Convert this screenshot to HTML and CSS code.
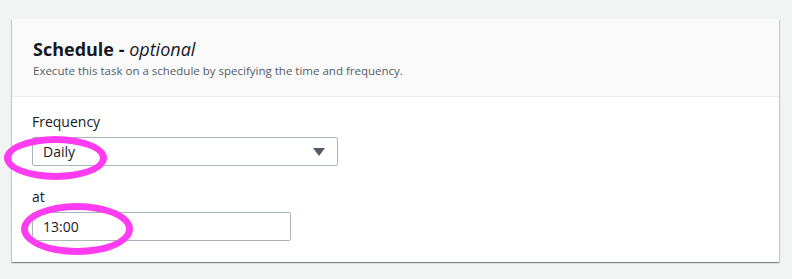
FILE: index.html
```html
<!DOCTYPE html>
<html lang="en">
<head>
    <meta charset="UTF-8">
    <title>Schedule</title>
    <link rel="stylesheet" href="styles.css">
</head>
<body>
<div class="container">
    <header class="container-header">
        <h2>Schedule - <em>optional</em></h2>
        <p class="description">Execute this task on a schedule by specifying the time and frequency.</p>
    </header>
    <div class="container-body">
        <div class="field">
            <label class="field-label">Frequency</label>
            <div class="select">
                <span>Daily</span>
                <svg class="caret" width="12" height="8" viewBox="0 0 12 8"><path d="M0 0h12L6 8z" fill="#545b64"/></svg>
            </div>
        </div>
        <div class="field">
            <label class="field-label">at</label>
            <div class="input">13:00</div>
        </div>
    </div>
</div>

<!-- annotation rings from the screenshot -->
<div class="ring ring-daily"></div>
<div class="ring ring-time"></div>
</body>
</html>
```

FILE: styles.css
```css
body {
    margin: 0;
    padding: 19px 13px 16px 12px;
    background-color: #f2f3f3;
    font-family: 'Open Sans', sans-serif;
    color: #16191f;
}

.container {
    background-color: #fff;
    box-shadow: 0 1px 1px 0 rgba(0, 28, 36, 0.3), 1px 1px 1px 0 rgba(0, 28, 36, 0.15), -1px 1px 1px 0 rgba(0, 28, 36, 0.15);
}

.container-header {
    background-color: #fafafa;
    border-bottom: 1px solid #eaeded;
    padding: 18px 20px 17px 21px;
    height: 42px;
}

.container-header h2 {
    margin: 0;
    font-size: 18px;
    line-height: 24px;
    font-weight: 700;
}

.container-header em {
    font-weight: 400;
}

.description {
    margin: 2px 0 0;
    font-size: 11.5px;
    line-height: 16px;
    color: #545b64;
}

.container-body {
    padding: 15px 20px 21px 20px;
}

.field + .field {
    margin-top: 21px;
}

.field-label {
    display: block;
    font-size: 14px;
    line-height: 20px;
    margin-bottom: 5px;
}

.select, .input {
    box-sizing: border-box;
    height: 29px;
    border: 1px solid #aab7b8;
    border-radius: 2px;
    font-size: 14px;
    display: flex;
    align-items: center;
    padding: 0 10px;
}

.select {
    width: 306px;
    justify-content: space-between;
    padding-right: 12px;
}

.input {
    width: 259px;
}

.ring {
    position: absolute;
    border: 7px solid #ff3cf0;
    border-radius: 50%;
    box-sizing: border-box;
}

.ring-daily {
    left: 4px;
    top: 136px;
    width: 103px;
    height: 44px;
}

.ring-time {
    left: 21px;
    top: 203px;
    width: 112px;
    height: 52px;
}
```
